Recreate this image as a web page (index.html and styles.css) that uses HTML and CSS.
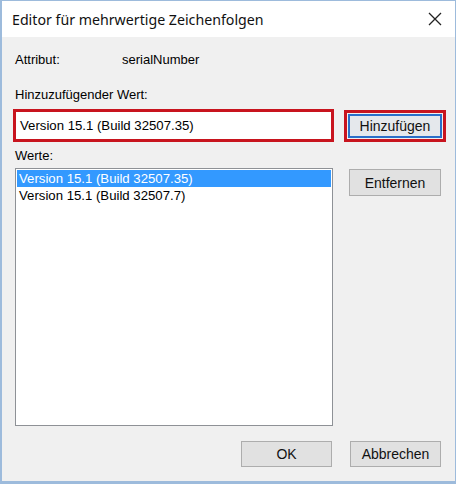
FILE: index.html
```html
<!DOCTYPE html>
<html>
<head>
<meta charset="utf-8">
<link rel="stylesheet" href="styles.css">
</head>
<body>
<div class="window">
  <div class="titlebar">
    <span class="title">Editor für mehrwertige Zeichenfolgen</span>
    <svg class="close" width="14" height="14" viewBox="0 0 14 14"><path d="M1 1 L13 13 M13 1 L1 13" stroke="#222" stroke-width="1.3" fill="none"/></svg>
  </div>
  <div class="content">
    <div class="attr">
      <span class="attr-label">Attribut:</span>
      <span class="attr-value">serialNumber</span>
    </div>
    <div class="label l-add">Hinzuzufügender Wert:</div>
    <div class="add-row">
      <div class="input hl">Version 15.1 (Build 32507.35)</div>
      <div class="btn-wrap hl">
        <div class="btn btn-default">Hinzufügen</div>
      </div>
    </div>
    <div class="label l-values">Werte:</div>
    <div class="list-row">
      <div class="listbox">
        <div class="item selected">Version 15.1 (Build 32507.35)</div>
        <div class="item">Version 15.1 (Build 32507.7)</div>
      </div>
      <div class="btn btn-remove">Entfernen</div>
    </div>
    <div class="footer">
      <div class="btn btn-foot">OK</div>
      <div class="btn btn-foot">Abbrechen</div>
    </div>
  </div>
</div>
</body>
</html>
```

FILE: styles.css
```css
html, body {
  margin: 0;
  padding: 0;
  background: #f0f0f0;
}
.window {
  width: 456px;
  height: 484px;
  box-sizing: border-box;
  border: 1px solid #9dbbdc;
  border-left-width: 2px;
  border-bottom-width: 3px;
  background: #f0f0f0;
  display: flex;
  flex-direction: column;
  font-family: "Liberation Sans", Arial, sans-serif;
  font-size: 13px;
  color: #000;
}
.titlebar {
  height: 36px;
  background: #fff;
  display: flex;
  align-items: center;
  padding: 0 13px 0 10px;
  justify-content: space-between;
  flex-shrink: 0;
}
.title {
  font-family: "Noto Sans", "Open Sans", sans-serif;
  font-size: 14.2px;
  color: #111;
}
.close {
  display: block;
}
.content {
  flex: 1;
  display: flex;
  flex-direction: column;
  padding: 14px 0 0 11px;
}
.attr {
  display: flex;
  height: 16px;
  align-items: center;
  padding-left: 2px;
}
.attr-label {
  width: 107px;
}
.label {
  height: 16px;
  line-height: 16px;
  padding-left: 2px;
}
.l-add {
  margin-top: 20px;
}
.add-row {
  display: flex;
  margin-top: 6px;
  align-items: flex-start;
}
.hl {
  border: 3px solid #c8141e;
  box-sizing: border-box;
}
.input {
  width: 321px;
  height: 33px;
  background: #fff;
  padding-left: 4px;
  display: flex;
  align-items: center;
  font-size: 13.2px;
}
.btn-wrap {
  margin-left: 10px;
  margin-top: 1px;
  width: 102px;
  height: 32px;
  padding: 1px;
  display: flex;
}
.btn {
  box-sizing: border-box;
  background: #e1e1e1;
  border: 1px solid #adadad;
  display: flex;
  align-items: center;
  justify-content: center;
  color: #111;
}
.btn-default {
  flex: 1;
  border: 2px solid #2a6fc9;
  background: #e5e8ec;
  font-size: 14px;
}
.l-values {
  margin-top: 6px;
}
.list-row {
  display: flex;
  margin-top: 4px;
  align-items: flex-start;
}
.listbox {
  margin-left: 2px;
  width: 318px;
  height: 258px;
  box-sizing: border-box;
  border: 1px solid #8e9196;
  background: #fff;
  padding: 1px;
  font-size: 13.2px;
}
.item {
  height: 17px;
  line-height: 17px;
  padding-left: 2px;
}
.item.selected {
  background: #3399ff;
  color: #fff;
}
.btn-remove {
  margin-left: 16px;
  margin-top: 1px;
  width: 92px;
  height: 27px;
  font-size: 14px;
}
.footer {
  display: flex;
  justify-content: flex-end;
  gap: 18px;
  margin-top: 15px;
  padding-right: 14px;
}
.btn-foot {
  width: 91px;
  height: 26px;
  font-size: 14px;
}
```
